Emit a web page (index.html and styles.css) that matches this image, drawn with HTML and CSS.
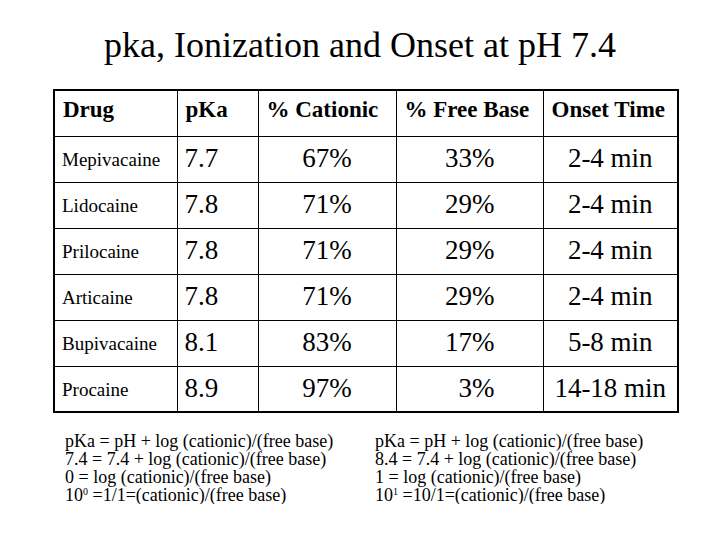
FILE: index.html
```html
<!DOCTYPE html>
<html>
<head>
<meta charset="utf-8">
<link rel="stylesheet" href="styles.css">
</head>
<body>
<h1 class="title">pka, Ionization and Onset at pH 7.4</h1>
<table class="grid">
  <colgroup>
    <col class="c-drug"><col class="c-pka"><col class="c-cat"><col class="c-free"><col class="c-onset">
  </colgroup>
  <thead>
    <tr class="head">
      <th>Drug</th><th>pKa</th><th>% Cationic</th><th>% Free Base</th><th>Onset Time</th>
    </tr>
  </thead>
  <tbody>
    <tr><td class="drug">Mepivacaine</td><td class="num">7.7</td><td class="cat">67%</td><td class="free">33%</td><td class="onset">2-4 min</td></tr>
    <tr><td class="drug">Lidocaine</td><td class="num">7.8</td><td class="cat">71%</td><td class="free">29%</td><td class="onset">2-4 min</td></tr>
    <tr><td class="drug">Prilocaine</td><td class="num">7.8</td><td class="cat">71%</td><td class="free">29%</td><td class="onset">2-4 min</td></tr>
    <tr><td class="drug">Articaine</td><td class="num">7.8</td><td class="cat">71%</td><td class="free">29%</td><td class="onset">2-4 min</td></tr>
    <tr><td class="drug">Bupivacaine</td><td class="num">8.1</td><td class="cat">83%</td><td class="free">17%</td><td class="onset">5-8 min</td></tr>
    <tr><td class="drug">Procaine</td><td class="num">8.9</td><td class="cat">97%</td><td class="free">3%</td><td class="onset">14-18 min</td></tr>
  </tbody>
</table>
<div class="formulas">
  <div class="formula">
    <div class="line">pKa = pH + log (cationic)/(free base)</div>
    <div class="line">7.4 = 7.4 + log (cationic)/(free base)</div>
    <div class="line">0 = log (cationic)/(free base)</div>
    <div class="line">10<sup>0</sup> =1/1=(cationic)/(free base)</div>
  </div>
  <div class="formula">
    <div class="line">pKa = pH + log (cationic)/(free base)</div>
    <div class="line">8.4 = 7.4 + log (cationic)/(free base)</div>
    <div class="line">1 = log (cationic)/(free base)</div>
    <div class="line">10<sup>1</sup> =10/1=(cationic)/(free base)</div>
  </div>
</div>
</body>
</html>
```
FILE: styles.css
```css
html, body {
  margin: 0;
  padding: 0;
  background: #ffffff;
  color: #000000;
  font-family: "Liberation Serif", "Times New Roman", serif;
}

.title {
  margin: 27px 0 0 0;
  font-size: 36px;
  line-height: 36px;
  font-weight: normal;
  text-align: center;
}

.grid {
  margin: 26px 0 0 53px;
  border-collapse: collapse;
  table-layout: fixed;
  border: 2px solid #000;
  font-family: "Liberation Serif", "Times New Roman", serif;
}

.c-drug { width: 123px; }
.c-pka { width: 81px; }
.c-cat { width: 138px; }
.c-free { width: 147px; }
.c-onset { width: 135px; }

.grid th,
.grid td {
  border: 1px solid #000;
  padding: 0 0 0 7px;
  line-height: 1;
  vertical-align: top;
  white-space: nowrap;
}

.grid tr { height: 46px; }

.head th {
  font-size: 23px;
  font-weight: bold;
  text-align: left;
  padding-top: 7px;
  padding-left: 8px;
}

.grid td {
  font-size: 27px;
  padding-top: 8px;
}

.grid td.drug {
  font-size: 19px;
  padding-top: 13px;
}

.grid td.cat,
.grid td.onset {
  text-align: center;
  padding-left: 0;
}

.grid td.free {
  text-align: right;
  padding-left: 0;
  padding-right: 48px;
}

.formulas {
  display: flex;
  margin: 19px 0 0 65px;
}

.formula {
  width: 310px;
  font-size: 18px;
  line-height: 18px;
}

.formula sup {
  font-size: 10px;
  line-height: 0;
  vertical-align: 6px;
}
```
